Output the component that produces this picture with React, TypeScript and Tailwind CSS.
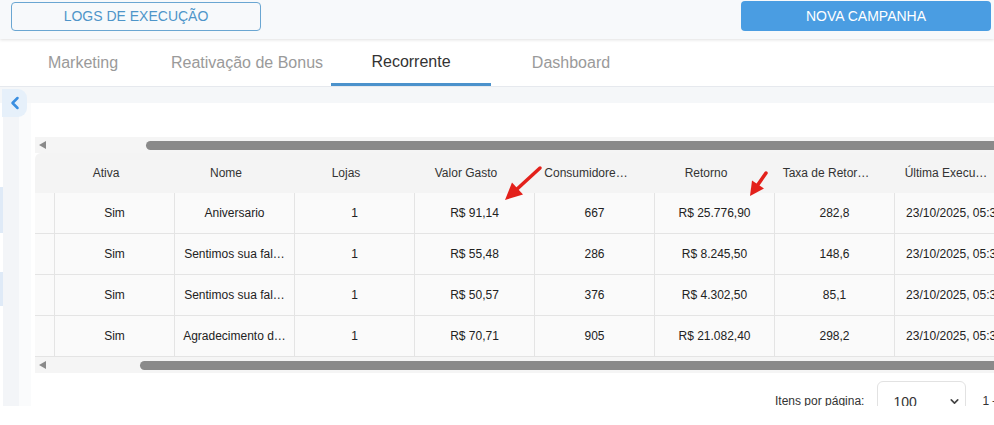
import React from "react";
import { ChevronLeft, ChevronDown } from "lucide-react";

const cols = [
  "Ativa",
  "Nome",
  "Lojas",
  "Valor Gasto",
  "Consumidore…",
  "Retorno",
  "Taxa de Retor…",
  "Última Execu…",
];

const rows = [
  ["Sim", "Aniversario", "1", "R$ 91,14", "667", "R$ 25.776,90", "282,8", "23/10/2025, 05:30"],
  ["Sim", "Sentimos sua fal…", "1", "R$ 55,48", "286", "R$ 8.245,50", "148,6", "23/10/2025, 05:30"],
  ["Sim", "Sentimos sua fal…", "1", "R$ 50,57", "376", "R$ 4.302,50", "85,1", "23/10/2025, 05:30"],
  ["Sim", "Agradecimento d…", "1", "R$ 70,71", "905", "R$ 21.082,40", "298,2", "23/10/2025, 05:30"],
];

function ScrollBar({ thumbLeft }: { thumbLeft: string }) {
  return (
    <div className="h-[16px] bg-[#f5f5f5] flex items-center">
      <div className="w-[11px] flex justify-end shrink-0">
        <div className="w-0 h-0 border-y-[4px] border-y-transparent border-r-[7px] border-r-[#8a8a8a]" />
      </div>
      <div className={`${thumbLeft} h-[9px] flex-1 bg-[#8a8a8a] rounded-l-full`} />
    </div>
  );
}

export default function App() {
  return (
    <div
      className="relative w-[994px] h-[425px] bg-white overflow-hidden text-[#222]"
      style={{ fontFamily: '"Liberation Sans", Arial, sans-serif' }}
    >
      {/* top bar */}
      <div className="relative z-10 h-[39px] bg-[#f7f9fb] shadow-[0_1px_3px_rgba(0,0,0,0.12)] flex items-start justify-between pl-[11px] pr-[3px]">
        <button className="mt-[2px] w-[250px] h-[29px] rounded-[4px] border border-[#6aa6d2] text-[#4e95c9] text-[14px] flex items-center justify-center">
          LOGS DE EXECUÇÃO
        </button>
        <button className="mt-[1px] w-[250px] h-[30px] rounded-[4px] bg-[#4a9de2] text-white text-[14px] flex items-center justify-center">
          NOVA CAMPANHA
        </button>
      </div>

      {/* tabs */}
      <div className="h-[48px] bg-white border-b border-[#e6e9ee] flex pl-[3px]">
        <div className="w-[160px] flex items-center justify-center text-[16px] text-[#9a9a9a]">Marketing</div>
        <div className="ml-[4px] w-[160px] flex items-center justify-center text-[16px] text-[#9a9a9a]">Reativação de Bonus</div>
        <div className="ml-[4px] w-[160px] flex flex-col text-[16px] text-[#333]">
          <div className="flex-1 flex items-center justify-center pt-[2px]">Recorrente</div>
          <div className="h-[3px] bg-[#4b92cc]" />
        </div>
        <div className="w-[160px] flex items-center justify-center text-[16px] text-[#9a9a9a]">Dashboard</div>
      </div>

      {/* content */}
      <div className="relative h-[319px] flex flex-col">
        <div className="h-[16px] bg-[#f5f7f9] shrink-0" />
        <div className="flex flex-1 min-h-0">
          {/* collapsed sidebar */}
          <div className="w-[3px] flex flex-col shrink-0">
            <div className="h-[84px]" />
            <div className="h-[46px] bg-[#dfeaf7]" />
            <div className="h-[39px]" />
            <div className="h-[34px] bg-[#dfeaf7]" />
          </div>
          <div className="w-[16px] bg-[#f3f5f8] shrink-0" />
          <div className="w-[12px] bg-[#fafbfc] shrink-0" />
          {/* main */}
          <div className="flex-1 min-w-0 bg-white pl-[4px] pt-[34px] overflow-hidden">
            <div className="w-[979px]">
              <ScrollBar thumbLeft="ml-[100px]" />
              {/* header */}
              <div className="flex h-[40px] bg-[#f4f4f4] rounded-tl-[6px] text-[12px] text-[#333]">
                <div className="w-[19px] shrink-0" />
                {cols.map((c) => (
                  <div key={c} className="w-[120px] shrink-0 pl-[8px] pr-[24px] flex items-center justify-center">
                    <span className="whitespace-nowrap">{c}</span>
                  </div>
                ))}
              </div>
              {/* rows */}
              {rows.map((r, i) => (
                <div key={i} className="flex h-[41px] bg-[#fafafa] border-b border-[#e4e4e4] text-[12px] text-[#222]">
                  <div className="w-[19px] shrink-0" />
                  {r.map((v, j) => (
                    <div key={j} className="w-[120px] shrink-0 border-l border-[#e4e4e4] px-[8px] flex items-center justify-center">
                      <span className="whitespace-nowrap">{v}</span>
                    </div>
                  ))}
                </div>
              ))}
              <ScrollBar thumbLeft="ml-[94px]" />
              {/* paginator */}
              <div className="flex items-start pl-[740px] pt-[8px]">
                <div className="text-[12px] text-[#333] mt-[11px] whitespace-nowrap">Itens por página:</div>
                <div className="ml-[13px] w-[89px] h-[40px] border border-[#e2e2e2] rounded-t-[6px] flex items-start pt-[10px] pl-[15px] pr-[4px] shrink-0">
                  <span className="text-[14px] text-[#333]">100</span>
                  <ChevronDown size={13} strokeWidth={3} className="ml-auto text-[#444] mt-[3px]" />
                </div>
                <div className="ml-[16px] text-[12px] text-[#333] mt-[11px] whitespace-nowrap">1 – 4 de 4</div>
              </div>
            </div>
          </div>
        </div>

        {/* collapse button */}
        <div className="absolute left-[2px] top-[2px] w-[25px] h-[28px] bg-[#e6f0fa] rounded-r-[9px] flex items-center justify-center">
          <ChevronLeft size={20} strokeWidth={3} className="text-[#3a8ee0]" />
        </div>
      </div>

      {/* annotation arrows */}
      <svg className="absolute left-0 top-0 pointer-events-none" width="994" height="425">
        <line x1="540" y1="168" x2="516" y2="190" stroke="#e3211b" strokeWidth="3.5" strokeLinecap="round" />
        <polygon points="505,200 523,194.4 512,182.6" fill="#e3211b" />
        <line x1="766" y1="173" x2="757" y2="186" stroke="#e3211b" strokeWidth="3.5" strokeLinecap="round" />
        <polygon points="750,196 764,188.5 752,180.5" fill="#e3211b" />
      </svg>
    </div>
  );
}
